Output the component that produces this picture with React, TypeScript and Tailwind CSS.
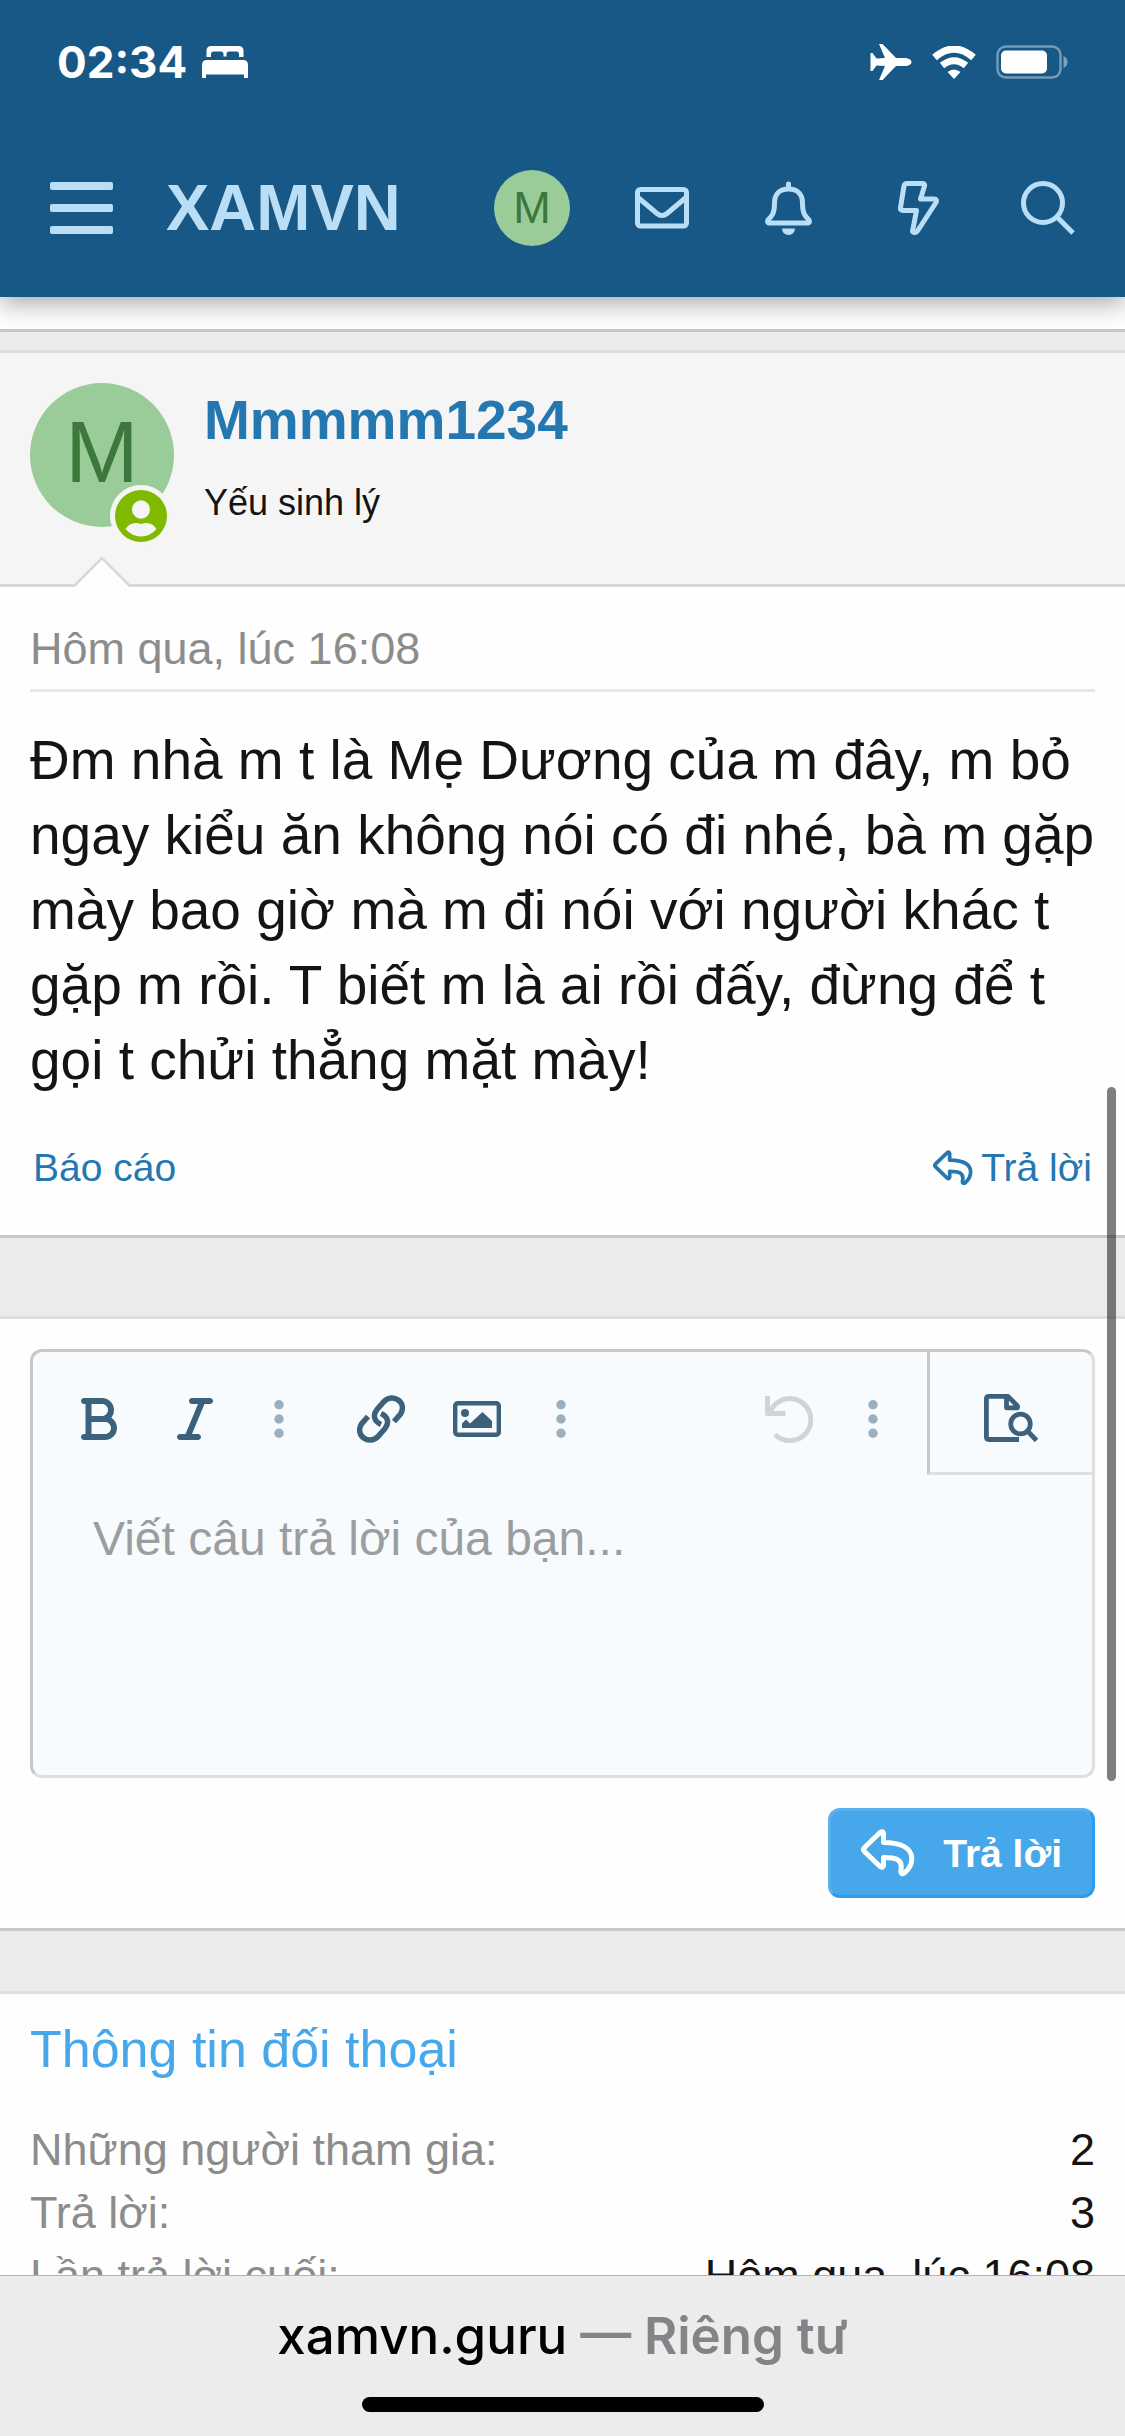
import React from 'react'
import { FaBold, FaItalic } from 'react-icons/fa6'

const ReplyIcon: React.FC<{ className: string }> = ({ className }) => (
  <svg viewBox="0 0 54 48" className={className} fill="none" stroke="currentColor" strokeWidth={5} strokeLinejoin="round">
    <path d="M22.5 13.5V4.5Q22 1.5 19 3.5L3.5 18.5Q1.5 20.5 3.5 22.5L19 37.5Q22 39.5 22.5 36.5V28.5C34 28.5 42 30 40 40.5C39 45 41.5 45.5 44 43.5C49 39 50.8 34.5 50.8 29.5C50.8 19 40 13.8 22.5 13.5Z" />
  </svg>
)

const DotsIcon = () => (
  <svg viewBox="0 0 10 38" className="h-[38px] w-[10px]" fill="#9ab0bf">
    <circle cx="5" cy="4.7" r="4.7" />
    <circle cx="5" cy="19" r="4.7" />
    <circle cx="5" cy="33.3" r="4.7" />
  </svg>
)

const StatusBar = () => (
  <div className="flex h-[124px] items-center justify-between px-[57px] text-white">
    <div className="flex items-center gap-[15px]">
      <span className="font-['Inter'] text-[44px] font-bold leading-[54px]">02:34</span>
      <svg viewBox="0 0 46 32" className="h-[32px] w-[46px]" fill="currentColor">
        <path d="M4.5 11V5Q4.5 0 9.5 0H36.5Q41.5 0 41.5 5V11H37V8Q37 5.5 34.5 5.5H27Q24.5 5.5 24.5 8V10.5H21.5V8Q21.5 5.5 19 5.5H11.5Q9 5.5 9 8V11Z" />
        <path d="M5 14H41Q46 14 46 19V32H42V28.5H4V32H0V19Q0 14 5 14Z" />
      </svg>
    </div>
    <div className="flex items-center gap-[20px]">
      <svg viewBox="0 0 42 36" className="h-[36px] w-[42px]" fill="currentColor">
        <path d="M9 0H12Q13 0 14 1.5L26 14H36Q41.5 15 41.5 18Q41.5 21 36 22H26L14 34.5Q13 36 12 36H9L15 22L6.5 21.5L2.5 27H0.5V9H2.5L6.5 14.5L15 14Z" />
      </svg>
      <svg viewBox="0 0 44 33" className="h-[33px] w-[44px]" fill="none" stroke="currentColor">
        <path d="M2.5 11.5Q22 -5.5 41.5 11.5" strokeWidth="7" />
        <path d="M10 19.5Q22 10 34 19.5" strokeWidth="7" />
        <path d="M15.5 26Q22 21 28.5 26L22 33Z" fill="currentColor" stroke="none" />
      </svg>
      <svg viewBox="0 0 72 34" className="h-[34px] w-[72px]">
        <rect x="1.5" y="1.5" width="63" height="31" rx="8.5" fill="none" stroke="#fff" strokeOpacity=".4" strokeWidth="2.5" />
        <rect x="5" y="5.5" width="46" height="23" rx="5" fill="#fff" />
        <path d="M67.5 11Q71.5 13 71.5 17T67.5 23Z" fill="#fff" fillOpacity=".45" />
      </svg>
    </div>
  </div>
)

const NavBar = () => (
  <nav className="flex h-[173px] items-center px-[50px] pb-[5px] text-[#badef5]">
    <button aria-label="Menu" className="flex w-[63px] flex-col gap-[14px]">
      <span className="h-[8px] w-full rounded-[2px] bg-current" />
      <span className="h-[8px] w-full rounded-[2px] bg-current" />
      <span className="h-[8px] w-full rounded-[2px] bg-current" />
    </button>
    <a href="#" className="ml-[53px] text-[65px] font-bold leading-[72px]">XAMVN</a>
    <div className="ml-auto flex items-center">
      <a href="#" className="flex size-[76px] items-center justify-center rounded-full bg-[#99cc99] pb-[2px] text-[45px] leading-none text-[#3c773c]">M</a>
      <button aria-label="Hộp thư" className="ml-[65px]">
        <svg viewBox="0 0 54 42" className="h-[42px] w-[54px]" fill="none" stroke="currentColor" strokeWidth="5" strokeLinejoin="round">
          <rect x="2.5" y="2.5" width="49" height="36.500" rx="3" />
          <path d="M3 10.5L22 26.5Q27 30.5 32 26.5L51 10.5" />
        </svg>
      </button>
      <button aria-label="Thông báo" className="ml-[76px]">
        <svg viewBox="0 0 47 54" className="h-[54px] w-[47px]" fill="none" stroke="currentColor" strokeWidth="5" strokeLinejoin="round" strokeLinecap="round">
          <path d="M23.5 8C13 8 9.5 15 9.5 22C9.5 33 6.5 35.5 3 39Q1.5 42 5 42H42Q45.5 42 44 39C40.5 35.5 37.5 33 37.5 22C37.5 15 34 8 23.5 8ZM23.5 7V3" />
          <path d="M17 47.5H30Q29.5 54 23.5 54T17 47.5Z" fill="currentColor" stroke="none" />
        </svg>
      </button>
      <button aria-label="Có gì mới" className="ml-[86px]">
        <svg viewBox="0 0 41 54" className="h-[54px] w-[41px]" fill="none" stroke="currentColor" strokeWidth="5" strokeLinejoin="round">
          <path d="M9 2.5H24Q27 2.5 26.5 5L22.5 18H36Q39.5 18 38 21.5L19.5 50Q17 53 14.5 50.5L18.5 29.5H5Q2 29.5 2.5 26.5L6 5Q6.5 2.5 9 2.5Z" />
        </svg>
      </button>
      <button aria-label="Tìm kiếm" className="ml-[82px]">
        <svg viewBox="0 0 54 54" className="size-[54px]" fill="none" stroke="currentColor" strokeWidth="5">
          <circle cx="22" cy="22" r="19.5" />
          <path d="M36 36L52 52" />
        </svg>
      </button>
    </div>
  </nav>
)

const Message = () => (
  <article className="border-y-[3px] border-b-[#c8c8c8] border-t-[#dfdfdf] bg-[#fefefe]">
    <div className="relative flex gap-[30px] border-b-[3px] border-[#d8d8d8] bg-[#f5f5f5] px-[30px] pb-[57px] pt-[30px]">
      <div className="relative flex size-[144px] shrink-0 items-center justify-center rounded-full bg-[#99cc99] pb-[6px] text-[88px] leading-none text-[#3c773c]">
        M
        <svg viewBox="0 0 62 62" className="absolute -bottom-5 left-[80px] size-[62px]">
          <circle cx="31" cy="31" r="31" fill="#f5f5f5" />
          <circle cx="31" cy="31" r="26" fill="#7fb900" />
          <ellipse cx="31" cy="24.5" rx="9" ry="9.3" fill="#f5f5f5" />
          <path d="M15.5 44C19 38.5 24 36.5 31 39C38 36.5 43 38.5 46.5 44Q40 51.5 31 51.5T15.5 44Z" fill="#f5f5f5" />
        </svg>
      </div>
      <div className="flex flex-col gap-[22px]">
        <h4 className="text-[55px] font-bold leading-[75px] text-[#2577b1]">
          <a href="#">Mmmmm1234</a>
        </h4>
        <h5 className="text-[36px] leading-[45px]">Yếu sinh lý</h5>
      </div>
      <svg viewBox="0 0 56 32" className="absolute -bottom-[3px] left-[74px] h-[32px] w-[56px]">
        <path d="M0 32L28 3L56 32Z" fill="#fefefe" />
        <path d="M0 31L28 3L56 31" fill="none" stroke="#d8d8d8" strokeWidth="2.5" />
      </svg>
    </div>
    <div className="px-[30px] pb-[45px]">
      <div className="border-b-[3px] border-[#e6e6e6] pb-[9px] pt-[30px] text-[45px] leading-[63px] text-[#8c8c8c]">
        <time>Hôm qua, lúc 16:08</time>
      </div>
      <p className="pt-[31px] text-[55px] leading-[75px]">
        Đm nhà m t là Mẹ Dương của m đây, m bỏ ngay kiểu ăn không nói có đi nhé, bà m gặp mày bao giờ mà m đi nói với người khác t gặp m rồi. T biết m là ai rồi đấy, đừng để t gọi t chửi thẳng mặt mày!
      </p>
      <div className="flex items-center justify-between px-[3px] pt-[47px] text-[39px] leading-[45px] text-[#2577b1]">
        <a href="#">Báo cáo</a>
        <a href="#" className="flex items-center gap-[8px]">
          <ReplyIcon className="h-[36px] w-[40px]" />
          Trả lời
        </a>
      </div>
    </div>
  </article>
)

const Editor = () => (
  <form className="border-y-[3px] border-b-[#c8c8c8] border-t-[#dfdfdf] bg-[#fefefe] p-[30px]" onSubmit={e => e.preventDefault()}>
    <div className="overflow-hidden rounded-[12px] border-[3px] border-b-[#dfdfdf] border-l-[#c8c8c8] border-r-[#dfdfdf] border-t-[#c8c8c8] bg-[#f7fbfe] text-[#3b617c]">
      <div className="flex h-[123px] pl-[18px]">
        <button type="button" aria-label="Đậm" className="flex w-[96px] items-center justify-center pt-[10px]">
          <FaBold className="size-[48px]" />
        </button>
        <button type="button" aria-label="Nghiêng" className="flex w-[96px] items-center justify-center pt-[10px]">
          <FaItalic className="size-[48px]" />
        </button>
        <button type="button" aria-label="Thêm định dạng" className="flex w-[72px] items-center justify-center pt-[10px]">
          <DotsIcon />
        </button>
        <button type="button" aria-label="Chèn liên kết" className="ml-[18px] flex w-[96px] items-center justify-center pt-[10px]">
          <svg viewBox="0 0 48 48" className="size-[48px]" fill="none" stroke="currentColor" strokeWidth="5.5">
            <path d="M24 29.5C17 26.5 15.5 20 20 14.5L27 6.5C36 -2.5 50.5 7.5 43.5 19L37 26.5" />
            <path d="M24 18.5C31 21.5 32.5 28 28 33.5L21 41.5C12 50.5 -2.5 40.5 4.5 29L11 21.5" />
          </svg>
        </button>
        <button type="button" aria-label="Chèn ảnh" className="flex w-[96px] items-center justify-center pt-[10px]">
          <svg viewBox="0 0 48 36" className="h-[36px] w-[48px]" fill="currentColor">
            <rect x="2.2" y="2.2" width="43.6" height="31.6" rx="2.5" fill="none" stroke="currentColor" strokeWidth="4.4" />
            <circle cx="12" cy="12" r="4" />
            <path d="M9 27V22.5L13 18.5L17 22.5L29.5 11L39 20V27Z" />
          </svg>
        </button>
        <button type="button" aria-label="Chèn thêm" className="flex w-[72px] items-center justify-center pt-[10px]">
          <DotsIcon />
        </button>
        <button type="button" aria-label="Hoàn tác" className="ml-auto flex w-[96px] items-center justify-center pt-[10px] text-[#d3d3d3]">
          <svg viewBox="0 0 48 48" className="size-[48px]" fill="none" stroke="currentColor" strokeWidth="5" strokeLinejoin="round">
            <path d="M2.5 1V18.5H20.5" />
            <path d="M5.5 16.5A21 21 0 1 1 10 39.5" />
          </svg>
        </button>
        <button type="button" aria-label="Tùy chọn khác" className="flex w-[72px] items-center justify-center pt-[10px]">
          <DotsIcon />
        </button>
        <button type="button" aria-label="Xem trước" className="ml-[18px] flex w-[165px] items-center justify-center border-b-[3px] border-l-[3px] border-b-[#dfdfdf] border-l-[#c8c8c8] pt-[12px]">
          <svg viewBox="0 0 54 48" className="h-[48px] w-[54px]" fill="none" stroke="currentColor" strokeWidth="4.8" strokeLinejoin="round">
            <path d="M35 45.5H5Q2.4 45.5 2.4 43V5Q2.4 2.4 5 2.4H24L33.5 12V13.8H22.5V2.4" />
            <circle cx="36.5" cy="30" r="9.8" />
            <path d="M44 37.5L52.5 46.5" />
          </svg>
        </button>
      </div>
      <textarea
        aria-label="Viết câu trả lời của bạn..."
        placeholder="Viết câu trả lời của bạn..."
        className="block h-[300px] w-full resize-none bg-transparent px-[60px] pt-[31px] text-[48px] leading-[66px] text-[#141414] outline-none placeholder:text-[#9c9d9e]"
      />
    </div>
    <div className="mt-[30px] flex justify-end">
      <button className="flex h-[90px] items-center gap-[28px] rounded-[12px] border-[3px] border-b-[#2e9bea] border-l-[#5bb1ee] border-r-[#2e9bea] border-t-[#5bb1ee] bg-[#47a7eb] px-[30px] text-[39px] font-bold leading-[45px] text-white">
        <ReplyIcon className="h-[48px] w-[54px]" />
        Trả lời
      </button>
    </div>
  </form>
)

const info = [
  { label: 'Những người tham gia:', value: '2' },
  { label: 'Trả lời:', value: '3' },
  { label: 'Lần trả lời cuối:', value: 'Hôm qua, lúc 16:08' },
]

const ConversationInfo = () => (
  <section className="border-t-[3px] border-[#dfdfdf] bg-[#fefefe] px-[30px] pb-[30px] pt-[25px]">
    <h3 className="text-[52px] leading-[60px] text-[#47a7eb]">Thông tin đối thoại</h3>
    <dl className="mt-[39px] text-[45px] leading-[63px]">
      {info.map(row => (
        <div key={row.label} className="flex justify-between">
          <dt className="text-[#8c8c8c]">{row.label}</dt>
          <dd>{row.value}</dd>
        </div>
      ))}
    </dl>
  </section>
)

export default function App() {
  return (
    <div className="relative flex h-screen flex-col overflow-hidden bg-[#ebebeb] font-['Liberation_Sans',Arial,sans-serif] text-[#141414]">
      <header className="z-10 shrink-0 bg-[#185886] shadow-[0_6px_24px_rgba(0,0,0,0.35)]">
        <StatusBar />
        <NavBar />
      </header>

      <main className="min-h-0 flex-1 overflow-hidden">
        <div className="h-[35px] border-b-[3px] border-[#c8c8c8] bg-[#fefefe]" />
        <div className="h-[18px]" />
        <Message />
        <div className="h-[78px]" />
        <Editor />
        <div className="h-[60px]" />
        <ConversationInfo />
      </main>

      <footer className="flex shrink-0 flex-col items-center border-t border-[#b2b2b2] bg-[#ececed] pb-[24px] pt-[28px]">
        <div className="font-['Inter'] text-[51px] font-semibold leading-[63px] text-[#848488]">
          <span className="font-medium text-black">xamvn.guru</span> — Riêng tư
        </div>
        <div className="mt-[30px] h-[15px] w-[402px] rounded-full bg-black" />
      </footer>

      <div className="absolute right-[9px] top-[1087px] z-20 h-[694px] w-[9px] rounded-full bg-black/50" />
    </div>
  )
}
